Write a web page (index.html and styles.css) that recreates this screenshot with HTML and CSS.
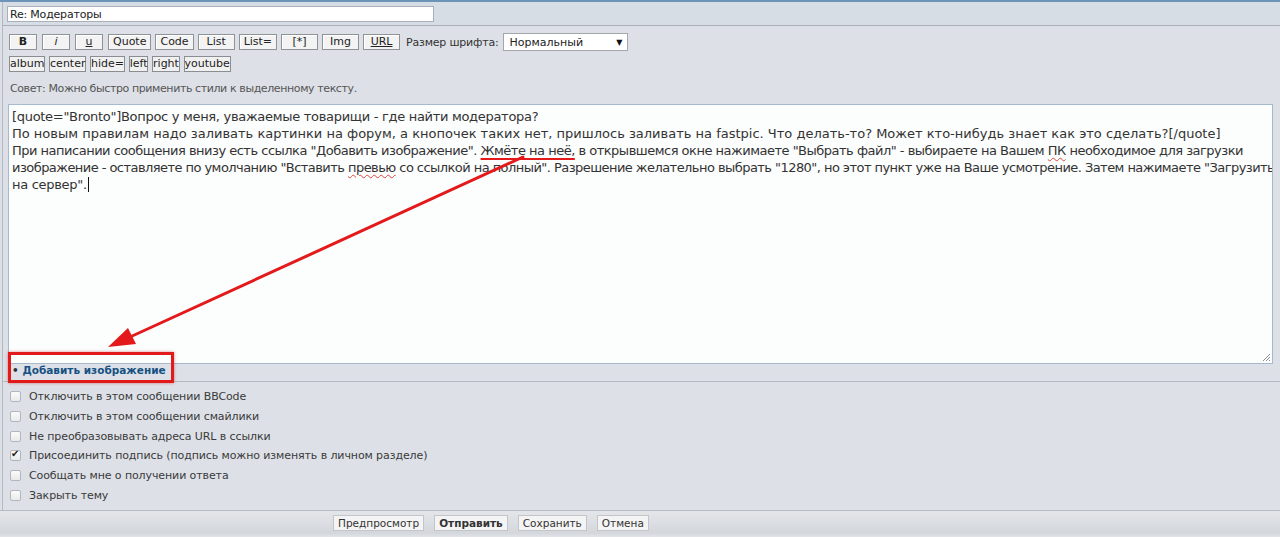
FILE: index.html
```html
<!DOCTYPE html>
<html lang="ru">
<head>
<meta charset="utf-8">
<title>Ответ</title>
<link rel="stylesheet" href="styles.css">
</head>
<body>
<div class="frame">
  <div class="panel">
    <div class="subject-row">
      <input class="subject" type="text" value="Re: Модераторы">
    </div>
    <div class="editor">
      <div class="toolbar">
        <button class="bb bb-s bold">B</button>
        <button class="bb bb-s ital">i</button>
        <button class="bb bb-s und">u</button>
        <button class="bb">Quote</button>
        <button class="bb">Code</button>
        <button class="bb">List</button>
        <button class="bb">List=</button>
        <button class="bb">[*]</button>
        <button class="bb">Img</button>
        <button class="bb und">URL</button>
        <span class="size-label">Размер шрифта:</span>
        <div class="select"><span>Нормальный</span><span class="caret">▼</span></div>
      </div>
      <div class="toolbar2">
        <button class="tag">album</button>
        <button class="tag">center</button>
        <button class="tag">hide=</button>
        <button class="tag">left</button>
        <button class="tag">right</button>
        <button class="tag">youtube</button>
      </div>
      <div class="hint">Совет: Можно быстро применить стили к выделенному тексту.</div>
      <div class="textarea">
        <div class="line l1">[quote="Bronto"]Вопрос у меня, уважаемые товарищи - где найти модератора?</div>
        <div class="line l2">По новым правилам надо заливать картинки на форум, а кнопочек таких нет, пришлось заливать на fastpic. Что делать-то? Может кто-нибудь знает как это сделать?[/quote]</div>
        <div class="line l3">При написании сообщения внизу есть ссылка "Добавить изображение". <span class="mark">Жмёте на неё,</span> в открывшемся окне нажимаете "Выбрать файл" - выбираете на Вашем <span class="spell">ПК</span> необходимое для загрузки</div>
        <div class="line l4">изображение - оставляете по умолчанию "Вставить <span class="spell">превью</span> со ссылкой на полный". Разрешение желательно выбрать "1280", но этот пункт уже на Ваше усмотрение. Затем нажимаете "Загрузить</div>
        <div class="line l5">на сервер".<span class="caret-cursor"></span></div>
        <svg class="grip" width="10" height="10" viewBox="0 0 10 10"><path d="M9 2L2 9M9 5L5 9M9 8L8 9" stroke="#8a8f96" stroke-width="1"/></svg>
      </div>
      <div class="addimg"><span class="bullet">•</span> <a href="#">Добавить изображение</a></div>
    </div>
    <div class="options">
      <label class="opt"><input type="checkbox"><span>Отключить в этом сообщении BBCode</span></label>
      <label class="opt"><input type="checkbox"><span>Отключить в этом сообщении смайлики</span></label>
      <label class="opt"><input type="checkbox"><span>Не преобразовывать адреса URL в ссылки</span></label>
      <label class="opt"><input type="checkbox" checked><span>Присоединить подпись (подпись можно изменять в личном разделе)</span></label>
      <label class="opt"><input type="checkbox"><span>Сообщать мне о получении ответа</span></label>
      <label class="opt"><input type="checkbox"><span>Закрыть тему</span></label>
    </div>
  </div>
  <div class="actions">
    <button class="act">Предпросмотр</button>
    <button class="act bold">Отправить</button>
    <button class="act">Сохранить</button>
    <button class="act">Отмена</button>
  </div>
</div>
<div class="redbox"></div>
<svg class="arrow" width="1280" height="537" viewBox="0 0 1280 537">
  <line x1="523" y1="157" x2="130" y2="337" stroke="#e3191b" stroke-width="3" stroke-linecap="round"/>
  <polygon points="108,347 136,344 128,328" fill="#e3191b"/>
</svg>
</body>
</html>
```
FILE: styles.css
```css
html, body {
  margin: 0;
  padding: 0;
}
body {
  width: 1280px;
  height: 537px;
  overflow: hidden;
  position: relative;
  background: #dde1e7;
  font-family: "DejaVu Sans", Verdana, sans-serif;
  font-size: 11px;
  color: #333;
}
.frame {
  border-top: 2px solid #6c93b8;
}
.panel {
  margin-left: 2px;
  border-left: 1px solid #b2b9c1;
}
.subject-row {
  background: #d6dde4;
  border-bottom: 1px solid #a9b0b8;
  padding: 4px 0 0 4px;
  box-sizing: border-box;
  height: 24px;
}
.subject {
  display: block;
  box-sizing: border-box;
  width: 427px;
  height: 16px;
  border: 1px solid #a9b0b9;
  background: #fff;
  padding: 0 2px;
  margin: 0;
  font-family: "DejaVu Sans", Verdana, sans-serif;
  font-size: 11px;
  letter-spacing: -0.2px;
  color: #222;
  outline: none;
}
.editor {
  padding: 7px 7px 0 5px;
}
.toolbar {
  display: flex;
  align-items: center;
  gap: 4px;
  height: 18px;
  padding-left: 1px;
}
.bb {
  box-sizing: border-box;
  height: 16px;
  min-width: 37px;
  padding: 0 4px;
  margin: 0;
  border: 1px solid #8f9398;
  background: #f3f3f3;
  box-shadow: inset 1px 1px 0 #fff;
  font-family: "DejaVu Sans", Verdana, sans-serif;
  font-size: 11px;
  line-height: 14px;
  color: #222;
}
.bb-s {
  min-width: 0;
  width: 28px;
  margin-right: 1px;
}
.bold { font-weight: bold; }
.ital { font-style: italic; }
.und { text-decoration: underline; }
.size-label {
  margin-left: 2px;
  color: #333;
  letter-spacing: -0.2px;
}
.select {
  box-sizing: border-box;
  width: 125px;
  height: 18px;
  border: 1px solid #a3a7ac;
  background: #fff;
  display: flex;
  align-items: center;
  justify-content: space-between;
  padding: 0 4px 0 6px;
  color: #222;
}
.caret {
  font-size: 8px;
  color: #111;
}
.toolbar2 {
  display: flex;
  gap: 3.6px;
  margin-top: 5px;
  padding-left: 1px;
}
.tag {
  box-sizing: border-box;
  height: 16px;
  padding: 0;
  margin: 0;
  border: 1px solid #8a8e93;
  background: #f0f0f0;
  font-family: "DejaVu Sans", Verdana, sans-serif;
  font-size: 11px;
  line-height: 14px;
  color: #222;
}
.hint {
  margin-top: 10px;
  padding-left: 2px;
  height: 14px;
  line-height: 14px;
  color: #555;
  letter-spacing: -0.4px;
}
.textarea {
  position: relative;
  box-sizing: border-box;
  margin-top: 8px;
  height: 260px;
  border: 1px solid #a6b9cd;
  background: #fcfdfd;
  padding: 3px 3px;
  font-size: 13px;
  line-height: 17px;
  color: #333;
  white-space: nowrap;
  overflow: hidden;
}
.l1 { letter-spacing: -0.3px; }
.l3 { letter-spacing: -0.5px; }
.l4 { letter-spacing: -0.55px; }
.l5 { letter-spacing: -0.3px; }
.mark {
  text-decoration: underline;
  text-decoration-color: #e3191b;
  text-decoration-thickness: 2px;
  text-underline-offset: 3px;
}
.spell {
  text-decoration: underline wavy #e0453f;
  text-decoration-thickness: 1px;
  text-underline-offset: 2px;
}
.caret-cursor {
  display: inline-block;
  width: 1px;
  height: 15px;
  background: #111;
  vertical-align: -3px;
  margin-left: 1px;
}
.grip {
  position: absolute;
  right: 1px;
  bottom: 1px;
}
.addimg {
  height: 17px;
  line-height: 13px;
  padding-left: 4px;
  font-weight: bold;
  font-size: 10.5px;
}
.addimg .bullet {
  color: #333;
}
.addimg a {
  color: #175183;
  text-decoration: none;
}
.options {
  border-top: 1px solid #b4bac1;
  padding: 5px 0 5px 7px;
}
.opt {
  display: flex;
  align-items: center;
  height: 19.7px;
  font-size: 11px;
  letter-spacing: -0.1px;
  color: #3a3a3a;
}
.opt input {
  -webkit-appearance: none;
  appearance: none;
  box-sizing: border-box;
  width: 11px;
  height: 11px;
  margin: 0 8px 0 0;
  border: 1px solid #b1b6bc;
  border-radius: 2px;
  background: linear-gradient(#fbfbfb, #e9eaeb);
  position: relative;
}
.opt input:checked::after {
  content: "✔";
  position: absolute;
  left: 0;
  top: -3px;
  font-size: 10px;
  color: #222;
}
.actions {
  border-top: 1px solid #b7bcc2;
  height: 27px;
  box-sizing: border-box;
  background: linear-gradient(#e4e6e9, #d3d7dc 85%, #e2e4e7);
  padding: 4px 0 0 333px;
  display: flex;
  gap: 10px;
}
.act {
  box-sizing: border-box;
  height: 16px;
  padding: 0 4px;
  margin: 0;
  border: 1px solid #c2c5c9;
  background: #f4f4f4;
  font-family: "DejaVu Sans", Verdana, sans-serif;
  font-size: 10.5px;
  line-height: 14px;
  color: #333;
}
.redbox {
  position: absolute;
  left: 8px;
  top: 352px;
  width: 166px;
  height: 31px;
  box-sizing: border-box;
  border: 3px solid #e11b1b;
  box-shadow: 0 0 3px rgba(190, 0, 0, 0.45);
  pointer-events: none;
}
.arrow {
  position: absolute;
  left: 0;
  top: 0;
  pointer-events: none;
}
```
